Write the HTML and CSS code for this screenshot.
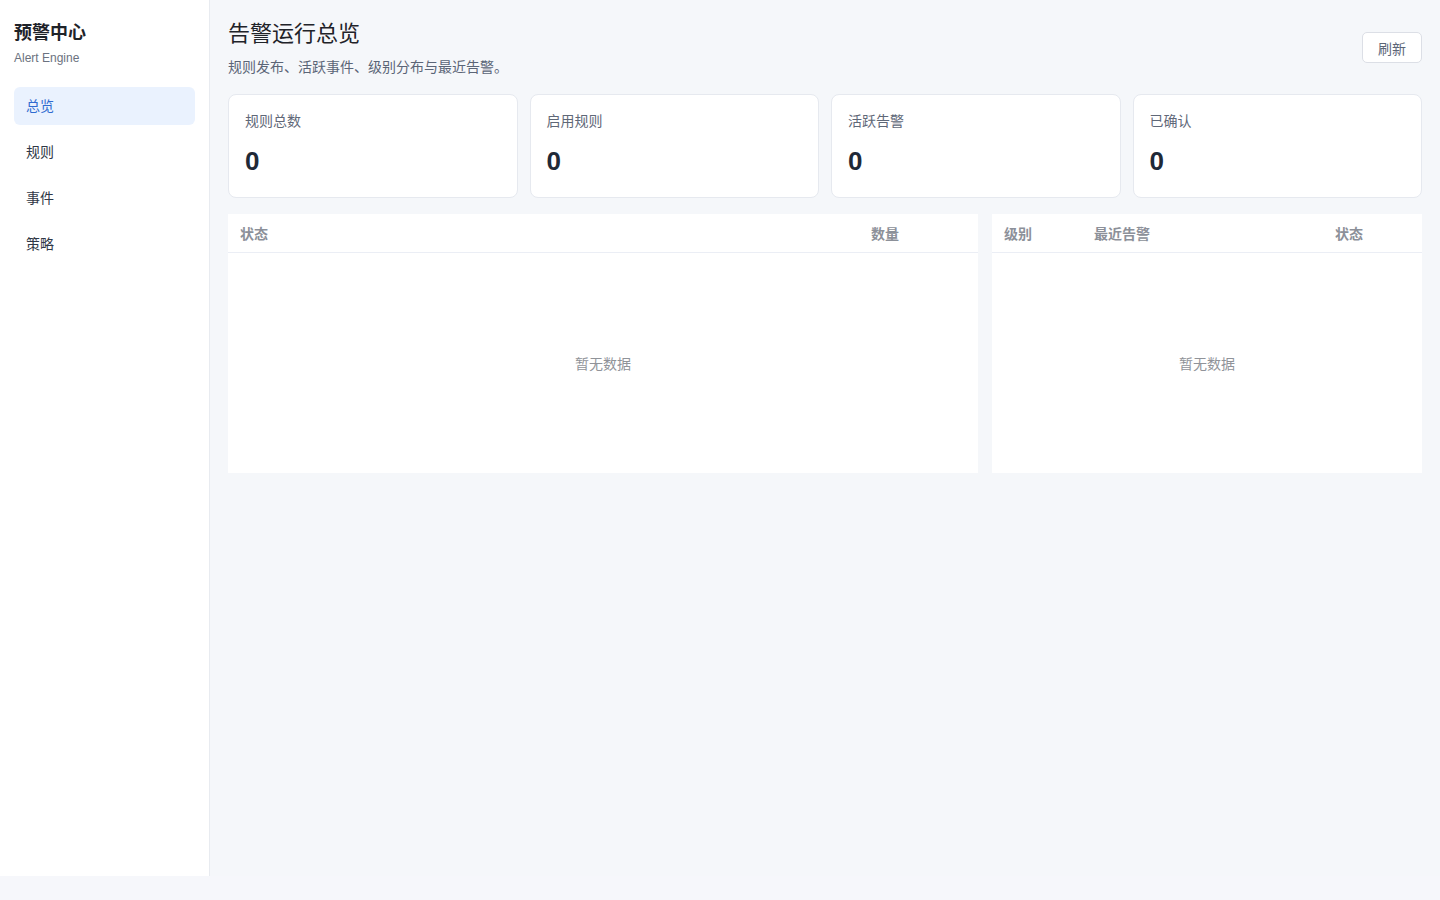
FILE: index.html
```html
<!DOCTYPE html>
<html lang="zh-CN">
<head>
  <meta charset="UTF-8">
  <meta name="viewport" content="width=device-width, initial-scale=1.0">
  <title>预警中心</title>
  <link rel="stylesheet" href="styles.css">
</head>
<body>
  <div class="layout">
    <!-- Sidebar -->
    <aside class="sidebar">
      <div class="brand">
        <div class="brand-name">预警中心</div>
        <div class="brand-sub">Alert Engine</div>
      </div>
      <nav class="nav">
        <a class="nav-item active">总览</a>
        <a class="nav-item">规则</a>
        <a class="nav-item">事件</a>
        <a class="nav-item">策略</a>
      </nav>
    </aside>

    <!-- Main content -->
    <main class="main">
      <div class="page-head">
        <div>
          <h1 class="page-title">告警运行总览</h1>
          <p class="page-desc">规则发布、活跃事件、级别分布与最近告警。</p>
        </div>
        <button class="btn">刷新</button>
      </div>

      <div class="stats">
        <div class="stat-card">
          <div class="stat-label">规则总数</div>
          <div class="stat-value">0</div>
        </div>
        <div class="stat-card">
          <div class="stat-label">启用规则</div>
          <div class="stat-value">0</div>
        </div>
        <div class="stat-card">
          <div class="stat-label">活跃告警</div>
          <div class="stat-value">0</div>
        </div>
        <div class="stat-card">
          <div class="stat-label">已确认</div>
          <div class="stat-value">0</div>
        </div>
      </div>

      <div class="panels">
        <div class="table">
          <div class="table-head">
            <div class="col col-grow">状态</div>
            <div class="col col-count">数量</div>
          </div>
          <div class="table-empty">暂无数据</div>
        </div>

        <div class="table">
          <div class="table-head">
            <div class="col col-level">级别</div>
            <div class="col col-grow">最近告警</div>
            <div class="col col-status">状态</div>
          </div>
          <div class="table-empty">暂无数据</div>
        </div>
      </div>
    </main>
  </div>
</body>
</html>
```

FILE: styles.css
```css
* {
  box-sizing: border-box;
}

body {
  margin: 0;
  font-family: "Liberation Sans", "Noto Sans CJK SC", sans-serif;
  background-color: #f6f7fb;
  color: #1f2937;
}

.layout {
  display: flex;
  height: 876px;
  background-color: #f5f7fa;
}

/* Sidebar */
.sidebar {
  width: 210px;
  flex-shrink: 0;
  background-color: #fff;
  border-right: 1px solid #e8ebf0;
  padding: 21px 14px;
}

.brand-name {
  font-size: 18px;
  font-weight: 700;
  color: #1f2329;
  line-height: 24px;
}

.brand-sub {
  margin-top: 5px;
  font-size: 12px;
  color: #6b7280;
  line-height: 16px;
}

.nav {
  display: flex;
  flex-direction: column;
  gap: 8px;
  margin-top: 21px;
}

.nav-item {
  display: block;
  height: 38px;
  line-height: 38px;
  padding: 0 12px;
  border-radius: 6px;
  font-size: 14px;
  color: #303846;
  cursor: pointer;
}

.nav-item.active {
  background-color: #eaf2fe;
  color: #2f6bd0;
}

/* Main */
.main {
  flex: 1;
  padding: 20px 18px;
}

.page-head {
  display: flex;
  justify-content: space-between;
  align-items: flex-start;
}

.page-title {
  margin: 0;
  font-size: 22px;
  font-weight: 400;
  line-height: 28px;
  color: #1f2329;
}

.page-desc {
  margin: 9px 0 0;
  font-size: 14px;
  line-height: 20px;
  color: #5b6577;
}

.btn {
  margin-top: 12px;
  height: 31px;
  padding: 0 15px;
  background-color: #fff;
  border: 1px solid #dcdfe6;
  border-radius: 5px;
  font-family: inherit;
  font-size: 14px;
  color: #5b6577;
  cursor: pointer;
}

.stats {
  display: grid;
  grid-template-columns: repeat(4, 1fr);
  gap: 12px;
  margin-top: 17px;
}

.stat-card {
  height: 104px;
  background-color: #fff;
  border: 1px solid #e6e9ef;
  border-radius: 8px;
  padding: 16px 16px;
}

.stat-label {
  font-size: 14px;
  line-height: 20px;
  color: #5f6878;
}

.stat-value {
  margin-top: 14px;
  font-size: 26px;
  font-weight: 700;
  line-height: 32px;
  color: #1f2937;
}

.panels {
  display: grid;
  grid-template-columns: 1fr 430px;
  gap: 14px;
  margin-top: 16px;
}

.table {
  background-color: #fff;
}

.table-head {
  display: flex;
  height: 39px;
  align-items: center;
  border-bottom: 1px solid #ebeef5;
  font-size: 14px;
  font-weight: 700;
  color: #8c9099;
}

.col {
  padding: 0 12px;
}

.col-grow {
  flex: 1;
}

.col-count {
  width: 119px;
}

.col-level {
  width: 90px;
}

.col-status {
  width: 99px;
}

.table-empty {
  height: 220px;
  display: flex;
  align-items: center;
  justify-content: center;
  font-size: 14px;
  color: #909399;
}
```
